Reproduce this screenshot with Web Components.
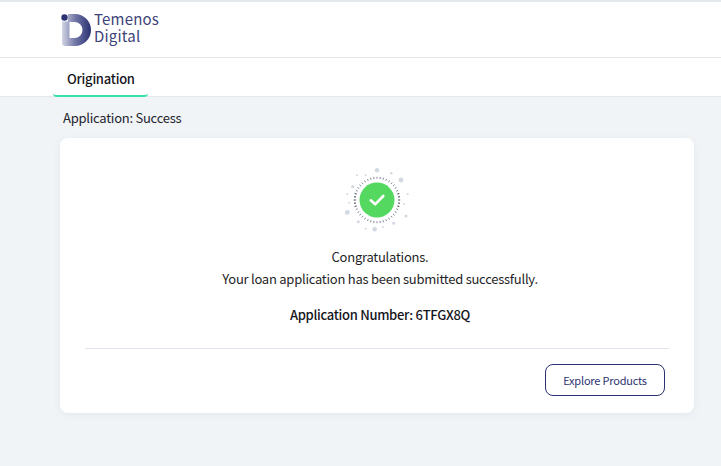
<!DOCTYPE html>
<html>
<head>
<meta charset="utf-8">
<style>
  html, body { margin: 0; height: 100%; }
  body {
    background: #f1f4f7;
    color: #1c1c24;
    font-family: "Noto Sans CJK SC", "Source Sans Pro", "Open Sans", sans-serif;
    font-size: 13px;
    letter-spacing: -.25px;
  }
</style>
</head>
<body>
<app-header></app-header>
<app-tabs><tab-item active>Origination</tab-item></app-tabs>
<page-title>Application: Success</page-title>
<success-card number="6TFGX8Q">
  <p>Congratulations.</p>
  <p>Your loan application has been submitted successfully.</p>
  <outline-button slot="actions">Explore Products</outline-button>
</success-card>

<script>
'use strict';

class AppHeader extends HTMLElement {
  constructor() {
    super();
    this.attachShadow({mode: 'open'}).innerHTML = `
      <style>
        :host {
          display: flex;
          align-items: center;
          gap: 3px;
          box-sizing: border-box;
          height: 58px;
          padding: 0 0 0 60px;
          background: #fff;
          border-top: 2px solid #e4e7ec;
          border-bottom: 1px solid #e4e7ec;
        }
        svg { display: block; }
        div {
          font-size: 15px;
          line-height: 17px;
          color: #3d4378;
          letter-spacing: .2px;
          margin-top: -6px;
        }
      </style>
      <svg width="31" height="32" viewBox="0 0 31 32">
        <defs>
          <linearGradient id="g" x1="0" y1="0" x2="1" y2="0">
            <stop offset="0" stop-color="#d3d6e4"/>
            <stop offset=".45" stop-color="#7378a8"/>
            <stop offset="1" stop-color="#2b3272"/>
          </linearGradient>
        </defs>
        <path fill="url(#g)" fill-rule="evenodd" d="M8 0H15A16 16 0 0 1 15 32H5A3 3 0 0 1 2 29V7.500H8ZM9.500 8V24H14.500A8 8 0 0 0 14.500 8Z"/>
        <circle cx="4.500" cy="3.500" r="3.200" fill="#2b3272"/>
      </svg>
      <div>Temenos<br>Digital</div>
    `;
  }
}

class AppTabs extends HTMLElement {
  constructor() {
    super();
    this.attachShadow({mode: 'open'}).innerHTML = `
      <style>
        :host {
          display: flex;
          box-sizing: border-box;
          height: 39px;
          padding-left: 53px;
          background: #fff;
          border-bottom: 1px solid #e4e7ec;
        }
      </style>
      <slot></slot>
    `;
  }
}

class TabItem extends HTMLElement {
  constructor() {
    super();
    this.attachShadow({mode: 'open'}).innerHTML = `
      <style>
        :host {
          display: block;
          box-sizing: border-box;
          width: 95px;
          height: 39px;
          padding: 11px 0 0 14px;
          line-height: 20px;
          font-weight: 500;
          color: #15151c;
        }
        :host([active]) {
          border-bottom: 2px solid #36e0ad;
          border-radius: 0 0 4px 4px;
        }
      </style>
      <slot></slot>
    `;
  }
}

class PageTitle extends HTMLElement {
  constructor() {
    super();
    this.attachShadow({mode: 'open'}).innerHTML = `
      <style>
        :host {
          display: block;
          padding: 11px 0 0 63px;
          height: 30px;
          line-height: 20px;
          color: #24242c;
        }
      </style>
      <slot></slot>
    `;
  }
}

class SuccessBadge extends HTMLElement {
  constructor() {
    super();
    // ring of ticks around the disc, then the loose dots further out
    let ticks = '';
    const n = 44;
    for (let i = 0; i < n; i++) {
      const a = i / n * Math.PI * 2;
      const c = Math.cos(a);
      const s = Math.sin(a);
      const side = Math.abs(c) > .93;
      ticks += `<line x1="${(32 + c * 21.2).toFixed(1)}" y1="${(32 + s * 21.2).toFixed(1)}"
        x2="${(32 + c * 23.2).toFixed(1)}" y2="${(32 + s * 23.2).toFixed(1)}"
        stroke="${side ? '#3a3f4c' : '#7f8795'}" stroke-width="1"/>`;
    }
    const dots = [
      [32, 2.3, 2.2], [56, 12, 2.4], [46.3, 5.3, 1.2], [12, 7.3, 1], [20.7, 7.3, 1],
      [7.7, 18.7, 1.6], [2.3, 26, 1], [4.3, 34.7, 1], [2.3, 44.3, 2.4], [13.3, 53.7, 1.5],
      [20.7, 60.7, 1], [29.7, 61.3, 2.3], [38, 59, 1], [48.7, 55.3, 1.5], [61, 48, 1.6],
      [59, 36, 1], [62.7, 26, 1]
    ];
    const loose = dots.map(([x, y, r]) =>
      `<circle cx="${x}" cy="${y}" r="${r}" fill="#d3d9e3"/>`).join('');
    this.attachShadow({mode: 'open'}).innerHTML = `
      <style>
        :host { display: block; width: 65px; height: 65px; }
        svg { display: block; }
      </style>
      <svg width="65" height="65" viewBox="0 0 65 65">
        ${loose}
        ${ticks}
        <circle cx="32" cy="32" r="17.500" fill="#55d860"/>
        <path d="M25.800 32.300l4.300 4 8.200-8.300" fill="none" stroke="#fff" stroke-width="2.600" stroke-linecap="round" stroke-linejoin="round"/>
      </svg>
    `;
  }
}

class OutlineButton extends HTMLElement {
  constructor() {
    super();
    this.attachShadow({mode: 'open'}).innerHTML = `
      <style>
        :host {
          display: flex;
          align-items: center;
          justify-content: center;
          box-sizing: border-box;
          width: 120px;
          height: 32px;
          border: 1px solid #2b3272;
          border-radius: 8px;
          background: #fff;
          color: #2b3272;
          font-size: 11px;
          letter-spacing: -.2px;
          cursor: pointer;
        }
      </style>
      <slot></slot>
    `;
  }
}

class SuccessCard extends HTMLElement {
  constructor() {
    super();
    this.attachShadow({mode: 'open'}).innerHTML = `
      <style>
        :host {
          display: block;
          box-sizing: border-box;
          width: 634px;
          height: 275px;
          margin-left: 60px;
          padding: 30px 25px 0;
          background: #fff;
          border-radius: 8px;
          box-shadow: 0 2px 8px rgba(40, 50, 80, .06);
        }
        .badge { display: flex; justify-content: center; }
        .msg {
          margin-top: 13px;
          padding-left: 6px;
          text-align: center;
          line-height: 22px;
          color: #1f1f27;
        }
        ::slotted(p) { margin: 0; }
        .num {
          margin-top: 14px;
          padding-left: 6px;
          text-align: center;
          line-height: 22px;
          font-weight: 500;
          letter-spacing: -.3px;
          color: #15151c;
        }
        hr {
          margin: 22px 0 0;
          border: 0;
          border-top: 1px solid #dfe4ec;
        }
        .actions {
          display: flex;
          justify-content: flex-end;
          margin-top: 15px;
          padding-right: 4px;
        }
      </style>
      <div class="badge"><success-badge></success-badge></div>
      <div class="msg"><slot></slot></div>
      <div class="num">Application Number: ${this.getAttribute('number')}</div>
      <hr>
      <div class="actions"><slot name="actions"></slot></div>
    `;
  }
}

customElements.define('app-header', AppHeader);
customElements.define('app-tabs', AppTabs);
customElements.define('tab-item', TabItem);
customElements.define('page-title', PageTitle);
customElements.define('success-badge', SuccessBadge);
customElements.define('outline-button', OutlineButton);
customElements.define('success-card', SuccessCard);
</script>
</body>
</html>
